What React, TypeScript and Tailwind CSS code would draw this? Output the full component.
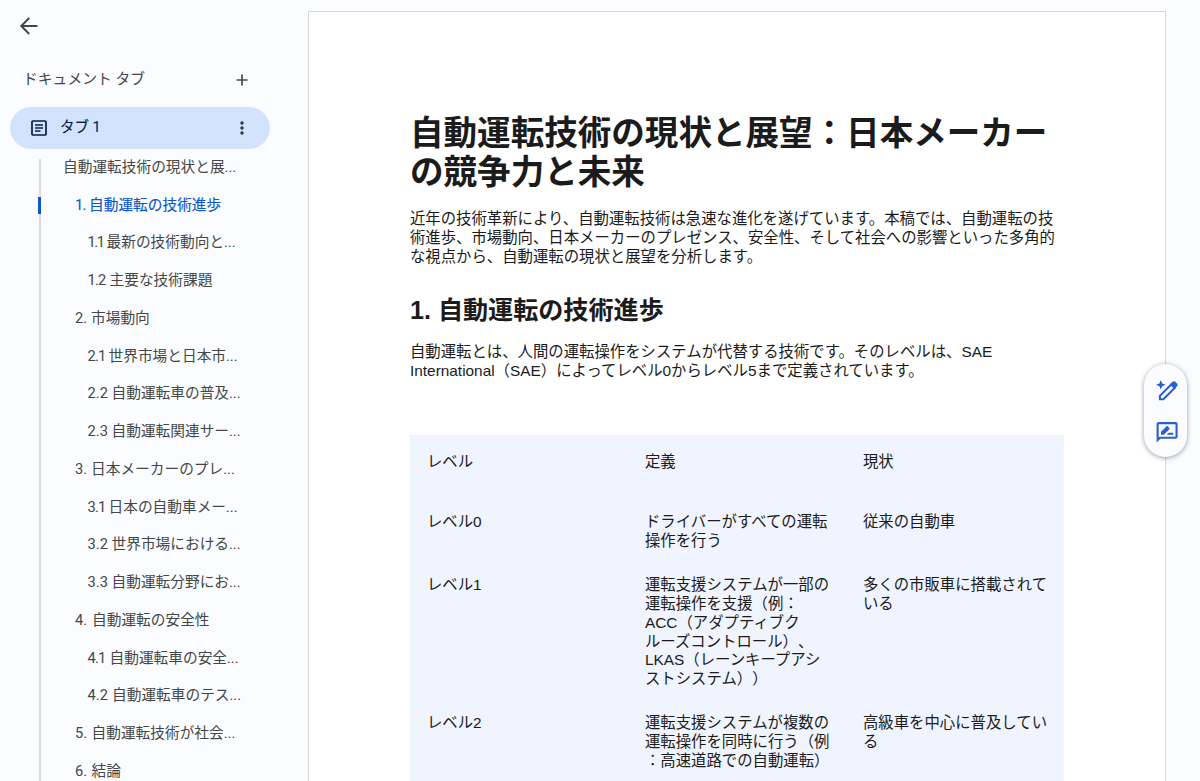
import { clsx } from "clsx";

type OutlineItem = {
  level: 0 | 1 | 2;
  num?: string;
  numClass?: string;
  title: string;
  active?: boolean;
};

const outline: OutlineItem[] = [
  { level: 0, title: "自動運転技術の現状と展..." },
  { level: 1, num: "1.", numClass: "w-[14px] tracking-[-0.8px]", title: "自動運転の技術進歩", active: true },
  { level: 2, num: "1.1", numClass: "w-[19px] tracking-[-1.4px]", title: "最新の技術動向と..." },
  { level: 2, num: "1.2", numClass: "w-[22px] tracking-[-0.8px]", title: "主要な技術課題" },
  { level: 1, num: "2.", numClass: "w-[16px]", title: "市場動向" },
  { level: 2, num: "2.1", numClass: "w-[21px] tracking-[-0.8px]", title: "世界市場と日本市..." },
  { level: 2, num: "2.2", numClass: "w-[24px]", title: "自動運転車の普及..." },
  { level: 2, num: "2.3", numClass: "w-[24px]", title: "自動運転関連サー..." },
  { level: 1, num: "3.", numClass: "w-[16px]", title: "日本メーカーのプレ..." },
  { level: 2, num: "3.1", numClass: "w-[21px] tracking-[-0.8px]", title: "日本の自動車メー..." },
  { level: 2, num: "3.2", numClass: "w-[24px]", title: "世界市場における..." },
  { level: 2, num: "3.3", numClass: "w-[24px]", title: "自動運転分野にお..." },
  { level: 1, num: "4.", numClass: "w-[17px]", title: "自動運転の安全性" },
  { level: 2, num: "4.1", numClass: "w-[22px] tracking-[-0.8px]", title: "自動運転車の安全..." },
  { level: 2, num: "4.2", numClass: "w-[24.5px]", title: "自動運転車のテス..." },
  { level: 1, num: "5.", numClass: "w-[16.5px]", title: "自動運転技術が社会..." },
  { level: 1, num: "6.", numClass: "w-[16.5px]", title: "結論" },
];

const levels = [
  {
    level: ["レベル0"],
    definition: ["ドライバーがすべての運転", "操作を行う"],
    status: ["従来の自動車"],
  },
  {
    level: ["レベル1"],
    definition: [
      "運転支援システムが一部の",
      "運転操作を支援（例：",
      "ACC（アダプティブク",
      "ルーズコントロール）、",
      "LKAS（レーンキープアシ",
      "ストシステム））",
    ],
    status: ["多くの市販車に搭載されて", "いる"],
  },
  {
    level: ["レベル2"],
    definition: ["運転支援システムが複数の", "運転操作を同時に行う（例", "：高速道路での自動運転）"],
    status: ["高級車を中心に普及してい", "る"],
  },
];

function Lines({ lines }: { lines: string[] }) {
  return (
    <>
      {lines.map((line) => (
        <span key={line} className="block whitespace-nowrap">
          {line}
        </span>
      ))}
    </>
  );
}

function Sidebar() {
  return (
    <aside className="flex w-[308px] shrink-0 flex-col font-['Roboto','Noto_Sans_CJK_JP',sans-serif] text-[#444746]">
      <button className="mt-[14px] ml-[17px] size-6 shrink-0" aria-label="戻る">
        <svg viewBox="0 0 24 24" className="size-6" fill="none" stroke="#444746" strokeWidth="2">
          <path d="M20.5 12H5M12.2 4 4.3 12l7.9 8" />
        </svg>
      </button>

      <div className="mt-[29px] flex h-6 shrink-0 items-center pr-[58px] pl-[23px]">
        <span className="text-[14.8px] leading-6 whitespace-nowrap">ドキュメント タブ</span>
        <svg viewBox="0 0 16 16" className="mt-px ml-auto size-4" fill="none" stroke="#444746" strokeWidth="1.7">
          <path d="M8 2.6v10.8M2.6 8h10.8" />
        </svg>
      </div>

      {/* Selected tab */}
      <div className="mt-4 ml-[10px] flex h-[42px] w-[260px] shrink-0 items-center rounded-full bg-[#d3e3fd] pr-5 pl-[21px] text-[#041e49]">
        <svg viewBox="0 0 16 16" className="size-4" fill="none" stroke="currentColor" strokeWidth="1.7">
          <rect x="1" y="1" width="14" height="14" rx="1" />
          <path d="M4 5h8M4 8h8M4 11h5.5" strokeWidth="1.5" />
        </svg>
        <span className="ml-[13px] text-[14.5px] leading-6 [-webkit-text-stroke:0.15px]">タブ 1</span>
        <svg viewBox="0 0 16 16" className="ml-auto size-4" fill="#303335">
          <circle cx="8" cy="3" r="1.7" />
          <circle cx="8" cy="8" r="1.7" />
          <circle cx="8" cy="13" r="1.7" />
        </svg>
      </div>

      <nav className="relative -mt-px shrink-0">
        <span className="absolute top-[11px] bottom-0 left-[39px] w-[1.5px] bg-[#dadce0]" />
        {outline.map(({ level, num, numClass, title, active }) => (
          <a
            key={title}
            className={clsx(
              "relative flex h-[37.75px] items-center text-[14.7px] leading-5 whitespace-nowrap",
              level === 0 && "pl-[63px]",
              level === 1 && "pl-[75px]",
              level === 2 && "pl-[87.5px]",
              active && "text-[#0b57d0] [-webkit-text-stroke:0.15px]"
            )}
          >
            {active && <span className="absolute top-[11px] left-[38px] h-[17px] w-[2.5px] bg-[#0b57d0]" />}
            {num && <span className={clsx("shrink-0", numClass)}>{num}</span>}
            <span>{title}</span>
          </a>
        ))}
      </nav>
    </aside>
  );
}

function DocumentPage() {
  return (
    <main className="mt-[11px] h-[800px] w-[858px] shrink-0 border-[1.5px] border-[#d5d7da] bg-white px-[101px] pt-[101.5px] font-['Liberation_Sans','Noto_Sans_CJK_JP',sans-serif] text-[15.38px] leading-[18.9px] text-[#1b1b1b] [text-spacing-trim:space-all]">
      <h1 className="text-[33.55px] leading-[39.5px] font-bold">
        <Lines lines={["自動運転技術の現状と展望：日本メーカー", "の競争力と未来"]} />
      </h1>
      <p className="mt-[17.5px]">
        <Lines
          lines={[
            "近年の技術革新により、自動運転技術は急速な進化を遂げています。本稿では、自動運転の技",
            "術進歩、市場動向、日本メーカーのプレゼンス、安全性、そして社会への影響といった多角的",
            "な視点から、自動運転の現状と展望を分析します。",
          ]}
        />
      </p>
      <h2 className="mt-[28.5px] text-[25.1px] leading-[30px] font-bold whitespace-nowrap">1. 自動運転の技術進歩</h2>
      <p className="mt-[17.5px]">
        <Lines
          lines={[
            "自動運転とは、人間の運転操作をシステムが代替する技術です。そのレベルは、SAE",
            "International（SAE）によってレベル0からレベル5まで定義されています。",
          ]}
        />
      </p>

      {/* Level table */}
      <div className="mt-[54.2px] h-[400px] w-[654px] bg-[#f0f4fe] pt-[18px] pl-[17px]">
        <div className="grid grid-cols-[218px_218px_1fr] pb-[41.6px]">
          <span>レベル</span>
          <span>定義</span>
          <span>現状</span>
        </div>
        {levels.map((row) => (
          <div key={row.level[0]} className="grid grid-cols-[218px_218px_1fr] pb-[24.8px]">
            <div>
              <Lines lines={row.level} />
            </div>
            <div>
              <Lines lines={row.definition} />
            </div>
            <div>
              <Lines lines={row.status} />
            </div>
          </div>
        ))}
      </div>
    </main>
  );
}

function FloatingActions() {
  return (
    <div className="absolute top-[364px] left-[1144px] flex h-[93px] w-[43px] flex-col items-center gap-[18px] rounded-full bg-[#fbfcff] pt-[14px] pl-[2px] text-[#2a5fd0] shadow-[0_1px_5px_rgba(0,0,0,0.38)]">
      <svg viewBox="0 0 24 24" className="size-6" fill="none" stroke="currentColor" strokeWidth="2">
        <path d="M4.9 21.3v-3.5L16.2 6.5l3.5 3.5L8.4 21.3z" />
        <path d="m15.6 5.6 1.9-1.8c.9-.8 2.1-.8 2.9 0l1.6 1.6c.8.8.8 2 0 2.9l-1.8 1.9z" fill="currentColor" stroke="none" />
        <path d="M5.8 2 7.2 5.4l3.5 1.4-3.5 1.4-1.4 3.4-1.4-3.4L1 6.8l3.4-1.4z" fill="currentColor" stroke="none" />
      </svg>
      <svg viewBox="0 0 24 24" className="size-6" fill="currentColor">
        <path fillRule="evenodd" d="M1.6 22.6V4.1c0-1.1.9-2 2-2h17c1.1 0 2 .9 2 2v12.7c0 1.1-.9 2-2 2H5.4zm2.1-5.1.7-.8h16.1V4.2H3.7z" />
        <path d="M6 14.7v-2.9l5.4-5.4c.4-.4 1-.4 1.4 0l1.5 1.5c.4.4.4 1 0 1.4l-5.4 5.4zM11.6 14.7l2-2h4.6v2z" />
      </svg>
    </div>
  );
}

export default function App() {
  return (
    <div className="relative flex h-[781px] w-[1200px] overflow-hidden bg-[#fafcff]">
      <Sidebar />
      <DocumentPage />
      <FloatingActions />
    </div>
  );
}
